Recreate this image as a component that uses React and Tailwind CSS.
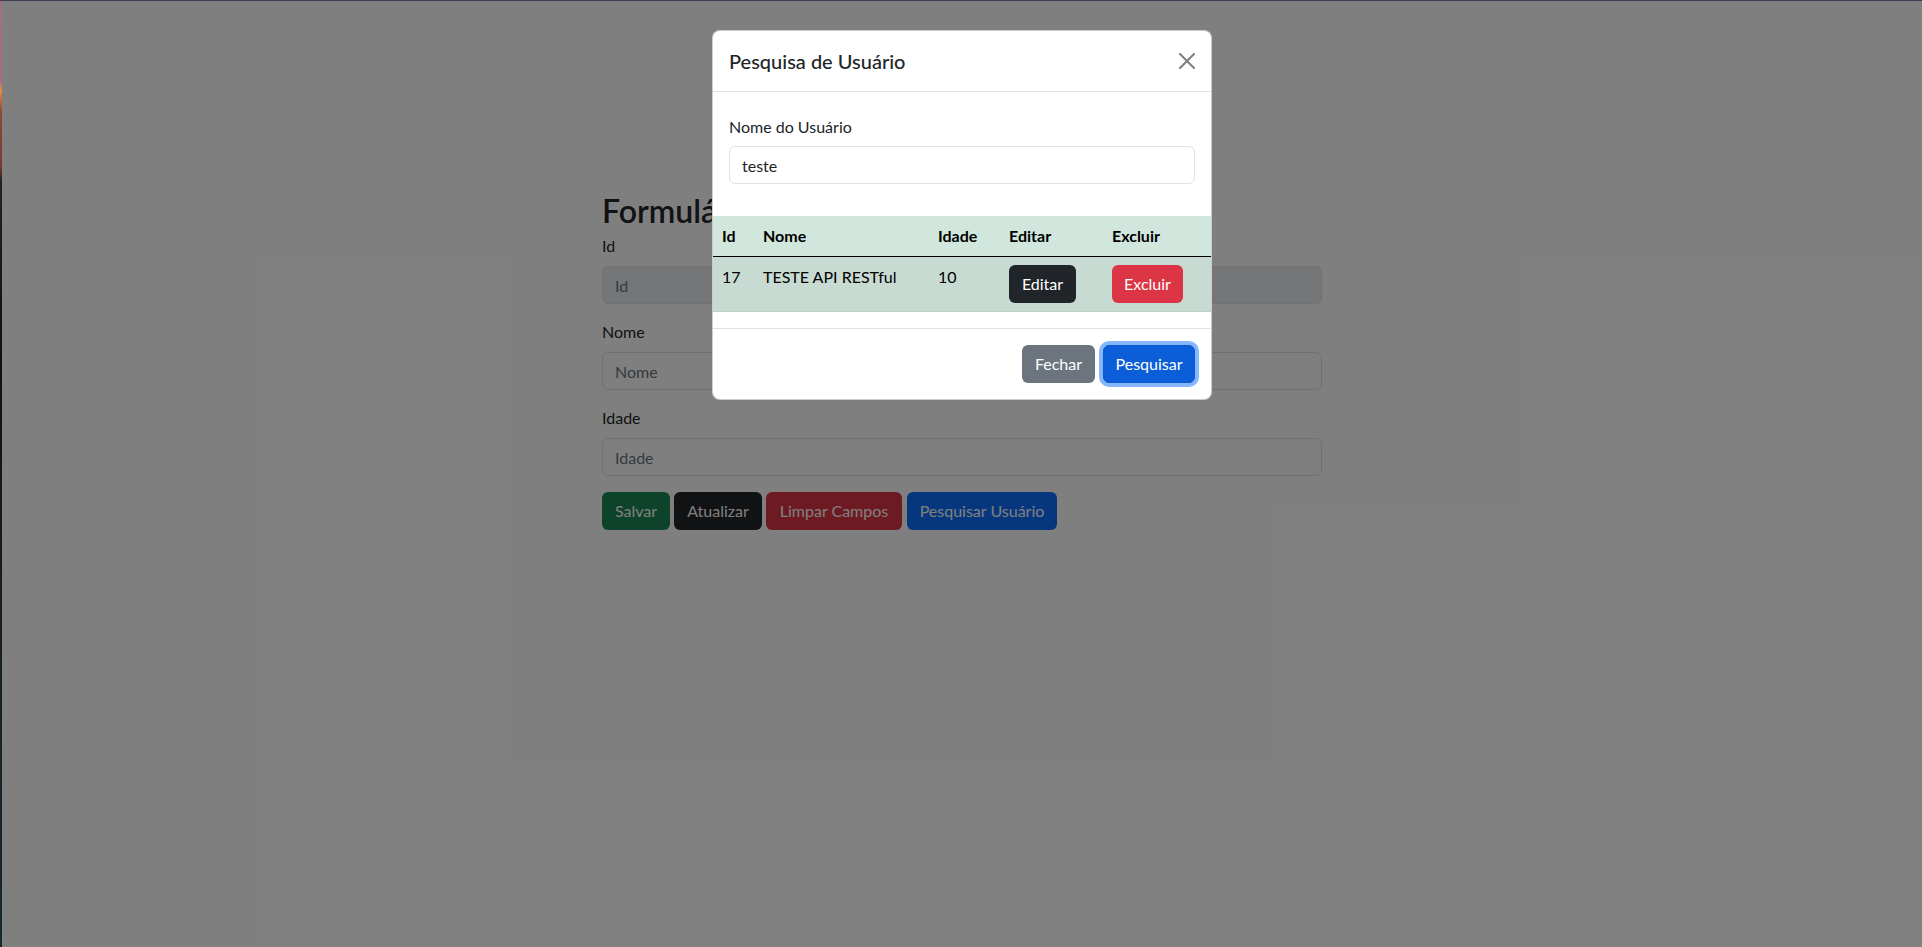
const font = { fontFamily: 'Lato, "Noto Sans", sans-serif' };

function CloseIcon() {
  return (
    <svg width="16" height="16" viewBox="0 0 16 16" className="opacity-50">
      <path
        fill="#000"
        d="M.293.293a1 1 0 0 1 1.414 0L8 6.586 14.293.293a1 1 0 1 1 1.414 1.414L9.414 8l6.293 6.293a1 1 0 0 1-1.414 1.414L8 9.414l-6.293 6.293a1 1 0 0 1-1.414-1.414L6.586 8 .293 1.707a1 1 0 0 1 0-1.414z"
      />
    </svg>
  );
}

function Field({ label, placeholder, disabled }) {
  return (
    <div className="mb-4">
      <label className="block h-6 leading-6 mb-2">{label}</label>
      <input
        disabled={disabled}
        placeholder={placeholder}
        className={`block w-full h-[38px] px-3 rounded-md border border-[#dee2e6] placeholder-[#6c757d] outline-none ${
          disabled ? 'bg-[#e9ecef]' : 'bg-white'
        }`}
      />
    </div>
  );
}

function UserForm() {
  return (
    <div className="w-[720px] mx-auto pt-[191px] text-[16px] text-[#212529]">
      <h2 className="text-[32px] leading-[38px] font-semibold mb-[4px]">Formulário de Usuário</h2>
      <Field label="Id" placeholder="Id" disabled />
      <Field label="Nome" placeholder="Nome" />
      <Field label="Idade" placeholder="Idade" />
      <div className="flex gap-1">
        <button className="w-[68px] h-[38px] rounded-md bg-[#198754] text-white">Salvar</button>
        <button className="w-[88px] h-[38px] rounded-md bg-[#212529] text-white">Atualizar</button>
        <button className="w-[136px] h-[38px] rounded-md bg-[#dc3545] text-white">Limpar Campos</button>
        <button className="w-[150px] h-[38px] rounded-md bg-[#0d6efd] text-white ml-px">Pesquisar Usuário</button>
      </div>
    </div>
  );
}

function SearchModal() {
  return (
    <div className="w-[500px] mx-auto mt-[29px] bg-white rounded-lg border border-black/20 text-[16px] text-[#212529]">
      <div className="h-[61px] px-4 flex items-center justify-between border-b border-[#dee2e6]">
        <h5 className="text-[20px] font-medium">Pesquisa de Usuário</h5>
        <button className="w-4 h-4 flex items-center justify-center">
          <CloseIcon />
        </button>
      </div>
      <div className="px-4 pt-[23px] pb-[32px]">
        <label className="block h-6 leading-6 mb-[7px]">Nome do Usuário</label>
        <input
          defaultValue="teste"
          className="block w-full h-[38px] px-3 rounded-md border border-[#dee2e6] outline-none"
        />
      </div>
      <table className="w-full border-collapse table-fixed">
        <colgroup>
          <col className="w-[42px]" />
          <col className="w-[175px]" />
          <col className="w-[71px]" />
          <col className="w-[103px]" />
          <col />
        </colgroup>
        <thead>
          <tr className="bg-[#d1e7dd] h-[40px] border-b border-black text-black">
            <th className="text-left font-bold pl-[9px] pr-2">Id</th>
            <th className="text-left font-bold px-2">Nome</th>
            <th className="text-left font-bold px-2">Idade</th>
            <th className="text-left font-bold px-2">Editar</th>
            <th className="text-left font-bold px-2">Excluir</th>
          </tr>
        </thead>
        <tbody>
          <tr className="bg-[#c7dbd2] border-b border-[#bdd0c7] text-black">
            <td className="align-top pl-[9px] pr-2 py-2 leading-6">17</td>
            <td className="align-top px-2 py-2 leading-6">TESTE API RESTful</td>
            <td className="align-top px-2 py-2 leading-6">10</td>
            <td className="align-top px-2 py-2">
              <button className="w-[67px] h-[38px] rounded-md bg-[#212529] text-white">Editar</button>
            </td>
            <td className="align-top px-2 py-2">
              <button className="w-[71px] h-[38px] rounded-md bg-[#dc3545] text-white">Excluir</button>
            </td>
          </tr>
        </tbody>
      </table>
      <div className="h-4" />
      <div className="border-t border-[#dee2e6] flex justify-end gap-2 pt-4 pb-4 pr-4">
        <button className="w-[73px] h-[38px] rounded-md bg-[#6c757d] text-white">Fechar</button>
        <button className="w-[92px] h-[38px] rounded-md bg-[#0b5ed7] border border-[#0a58ca] text-white shadow-[0_0_0_4px_rgba(13,110,253,0.5)]">
          Pesquisar
        </button>
      </div>
    </div>
  );
}

export default function App() {
  return (
    <div className="min-h-screen flex flex-col bg-white" style={font}>
      <div className="h-px bg-[#3d3f4e]" />
      <div className="flex flex-1 min-h-[946px]">
        <div className="w-[2px] bg-[linear-gradient(to_bottom,#a07088_0px,#a86c80_80px,#e88a40_90px,#904838_110px,#7a3a30_165px,#20251c_180px,#101010_360px,#141c22_520px,#1a2830_947px)]" />
        <div className="relative flex-1">
          <UserForm />
          <div className="absolute inset-0 bg-black/50">
            <SearchModal />
          </div>
        </div>
      </div>
    </div>
  );
}
